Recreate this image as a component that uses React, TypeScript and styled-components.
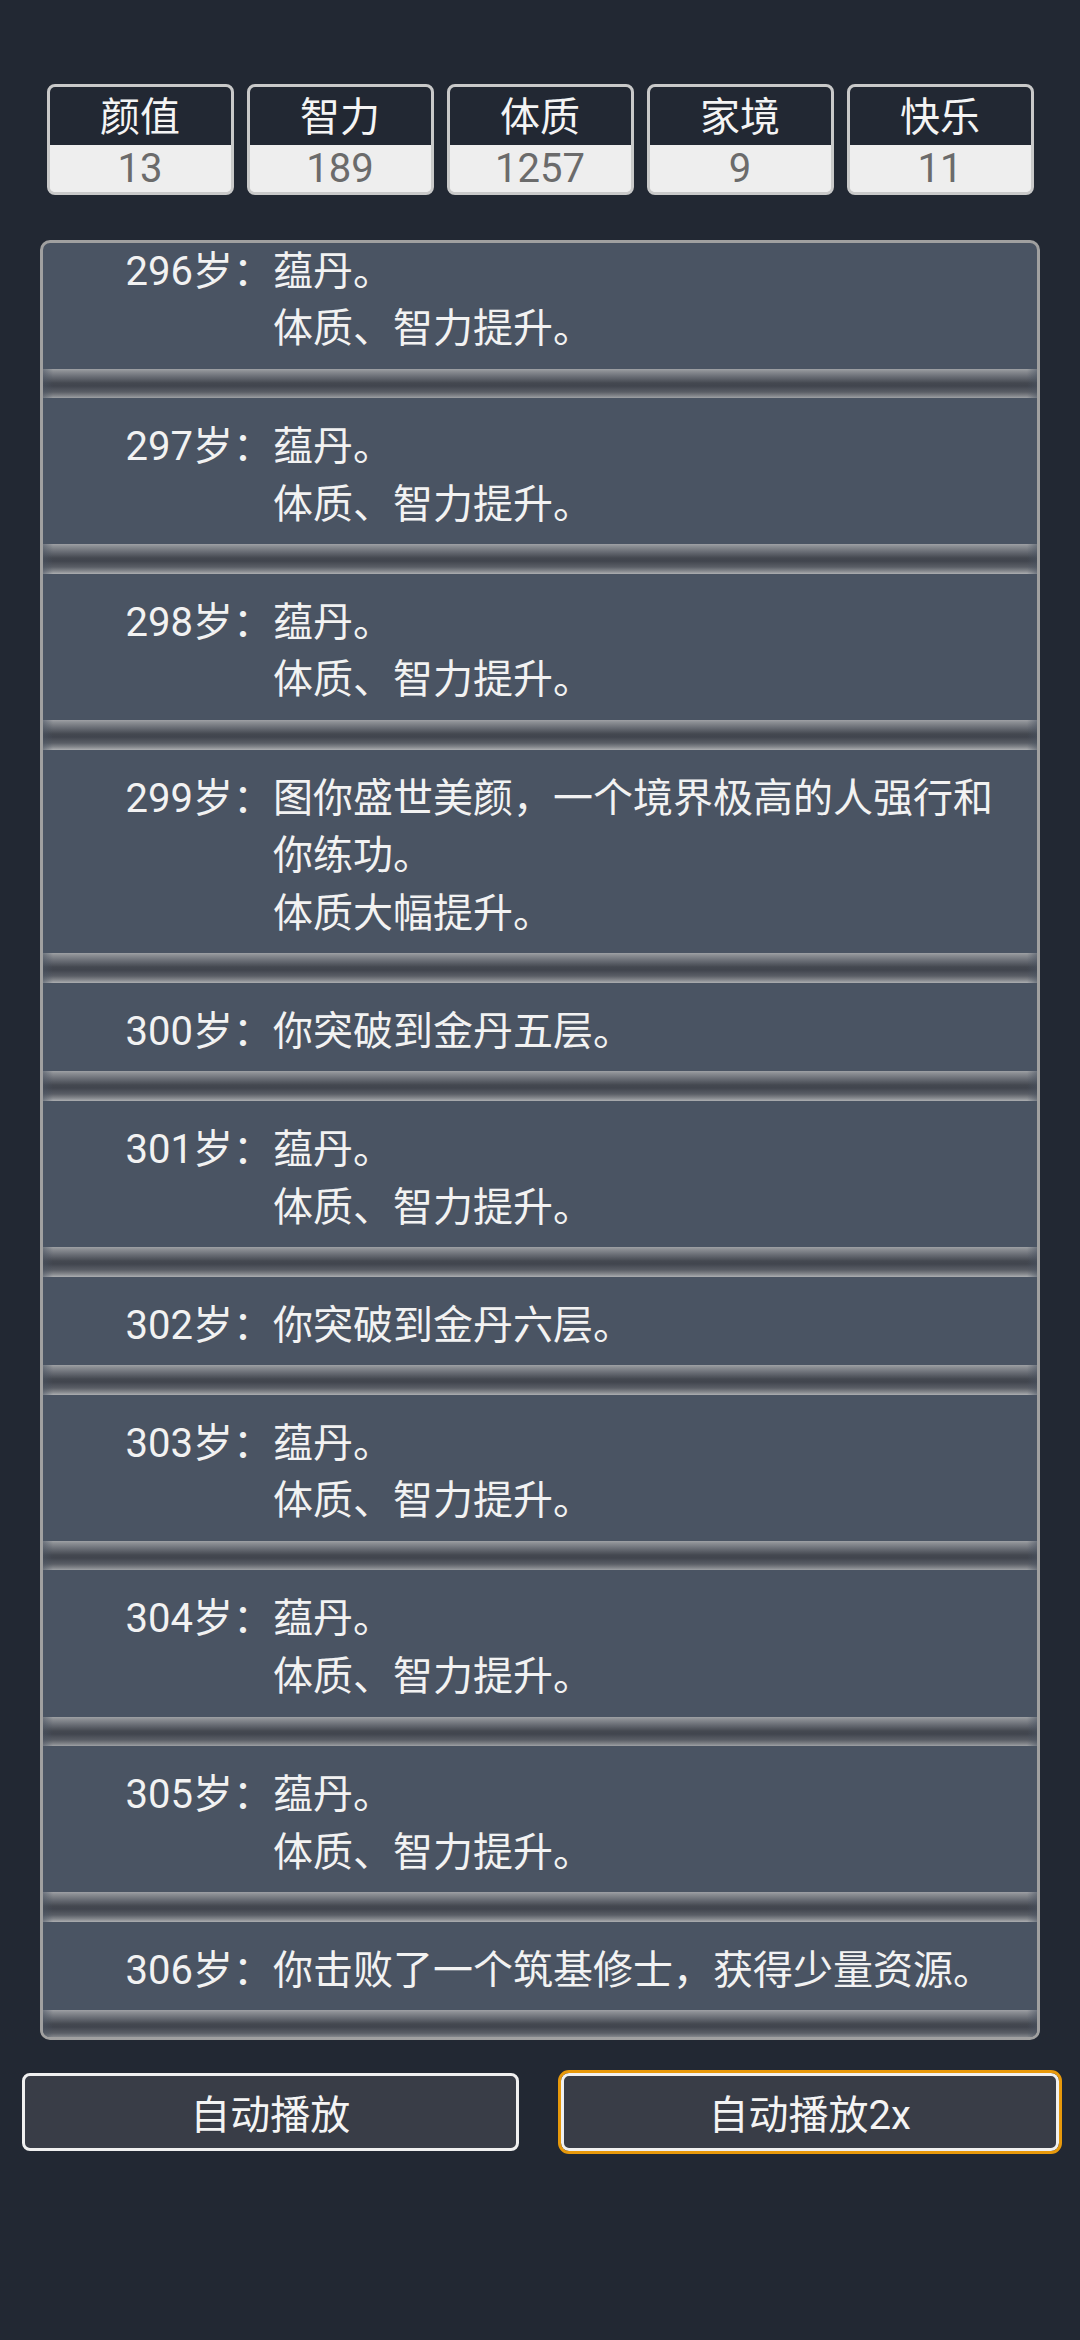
import React from "react";
import styled, { createGlobalStyle } from "styled-components";

const GlobalStyle = createGlobalStyle`
  html, body {
    margin: 0;
    padding: 0;
    background: #222833;
    min-height: 100%;
  }
  body {
    font-family: Roboto, "Noto Sans CJK SC", sans-serif;
    -webkit-font-smoothing: antialiased;
  }
  * { box-sizing: border-box; }
`;

const Page = styled.div`
  width: 1080px;
  min-height: 2340px;
  background: #222833;
  padding-top: 84px;
  display: flex;
  flex-direction: column;
`;

const StatsRow = styled.div`
  display: flex;
  gap: 13px;
  padding: 0 46.5px;
`;

const StatBox = styled.div`
  flex: 1;
  display: flex;
  flex-direction: column;
  border: 3px solid #c9c9c9;
  border-radius: 8px;
  overflow: hidden;
  background: #eeeeee;
`;

const StatLabel = styled.div`
  height: 58px;
  padding-top: 3px;
  background: #222833;
  color: #f4f4f4;
  font-size: 40px;
  line-height: 55px;
  text-align: center;
`;

const StatValue = styled.div`
  height: 47px;
  background: #eeeeee;
  color: #6b6b6b;
  font-size: 40px;
  line-height: 47px;
  text-align: center;
`;

const Panel = styled.div`
  margin: 45px 40px 0;
  height: 1800px;
  border: 3px solid #a0a0a0;
  border-radius: 10px;
  background: #4a5463;
  overflow: hidden;
`;

const LogList = styled.div`
  display: flex;
  flex-direction: column;
  margin-top: -20.5px;
`;

const Entry = styled.div`
  display: flex;
  padding: 20px 20px 11px 82.5px;
  color: #f2f2f2;
  font-size: 40px;
  line-height: 57.6px;
`;

const Age = styled.span`
  flex-shrink: 0;
  white-space: nowrap;
`;

const Body = styled.div`
  flex: 1;
  display: flex;
  flex-direction: column;
`;

const Divider = styled.div`
  height: 29.5px;
  flex-shrink: 0;
  background:
    linear-gradient(90deg, rgba(74, 84, 99, 0.55) 0px, rgba(74, 84, 99, 0) 10px, rgba(74, 84, 99, 0) calc(100% - 10px), rgba(74, 84, 99, 0.55) 100%),
    linear-gradient(180deg, #9fa1a5 0px, #8d9095 2px, #676b73 8px, #444850 14px, #41454e 17px, #5a5e66 23px, #84878c 27px, #a6a8ab 29.5px);
`;

const ButtonRow = styled.div`
  display: flex;
  gap: 42px;
  padding: 0 21.5px;
  margin-top: 32.5px;
`;

const PlayButton = styled.button<{ $active?: boolean }>`
  flex: 1;
  height: 78.5px;
  border: 3px solid #f0f0f0;
  border-radius: 8px;
  background: #393d47;
  color: #f4f4f4;
  font-family: Roboto, "Noto Sans CJK SC", sans-serif;
  font-size: 40px;
  padding: 0;
  outline: ${(p) => (p.$active ? "3px solid #e8990b" : "none")};
  outline-offset: 0;
`;

const stats = [
  { label: "颜值", value: "13" },
  { label: "智力", value: "189" },
  { label: "体质", value: "1257" },
  { label: "家境", value: "9" },
  { label: "快乐", value: "11" },
];

const entries: { age: number; lines: string[] }[] = [
  { age: 296, lines: ["蕴丹。", "体质、智力提升。"] },
  { age: 297, lines: ["蕴丹。", "体质、智力提升。"] },
  { age: 298, lines: ["蕴丹。", "体质、智力提升。"] },
  { age: 299, lines: ["图你盛世美颜，一个境界极高的人强行和你练功。", "体质大幅提升。"] },
  { age: 300, lines: ["你突破到金丹五层。"] },
  { age: 301, lines: ["蕴丹。", "体质、智力提升。"] },
  { age: 302, lines: ["你突破到金丹六层。"] },
  { age: 303, lines: ["蕴丹。", "体质、智力提升。"] },
  { age: 304, lines: ["蕴丹。", "体质、智力提升。"] },
  { age: 305, lines: ["蕴丹。", "体质、智力提升。"] },
  { age: 306, lines: ["你击败了一个筑基修士，获得少量资源。"] },
];

export default function App() {
  return (
    <>
      <GlobalStyle />
      <Page>
        <StatsRow>
          {stats.map((s) => (
            <StatBox key={s.label}>
              <StatLabel>{s.label}</StatLabel>
              <StatValue>{s.value}</StatValue>
            </StatBox>
          ))}
        </StatsRow>
        <Panel>
          <LogList>
            {entries.map((e) => (
              <React.Fragment key={e.age}>
                <Entry>
                  <Age>{e.age}岁：</Age>
                  <Body>
                    {e.lines.map((l, i) => (
                      <span key={i}>{l}</span>
                    ))}
                  </Body>
                </Entry>
                <Divider />
              </React.Fragment>
            ))}
          </LogList>
        </Panel>
        <ButtonRow>
          <PlayButton>自动播放</PlayButton>
          <PlayButton $active>自动播放2x</PlayButton>
        </ButtonRow>
      </Page>
    </>
  );
}
